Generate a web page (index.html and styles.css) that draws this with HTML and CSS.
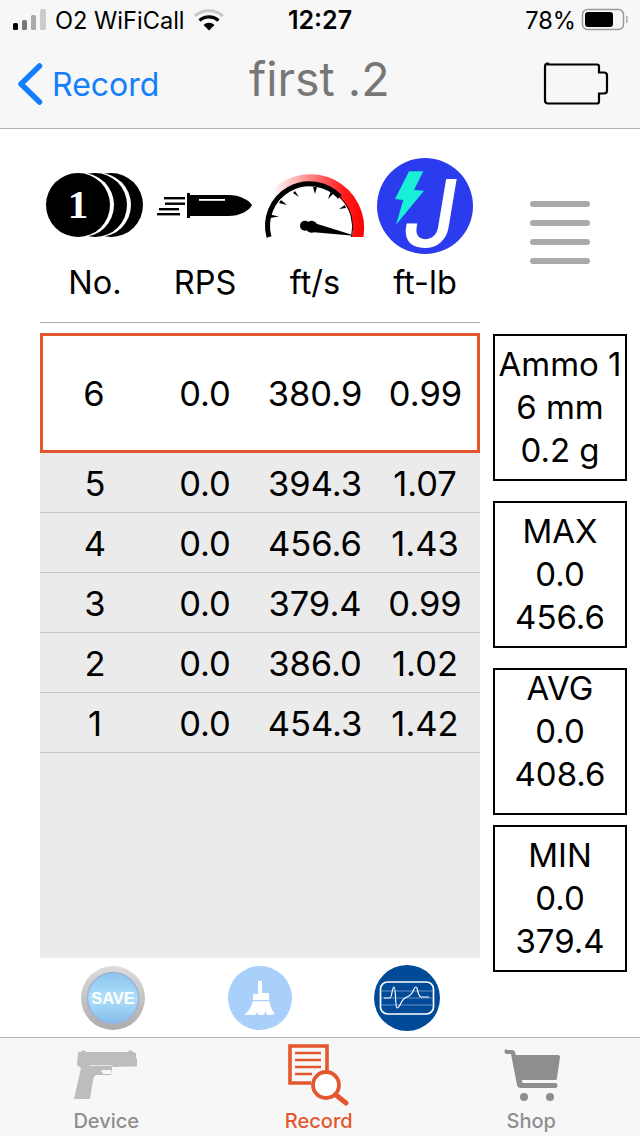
FILE: index.html
```html
<!DOCTYPE html>
<html lang="en">
<head>
<meta charset="utf-8">
<title>first .2</title>
<link rel="stylesheet" href="styles.css">
</head>
<body>
<div class="app">
  <header class="top">
    <div class="status">
      <div class="status-left">
        <svg class="signal" viewBox="13 8 34 24"><rect x="13" y="23" width="5" height="7" rx="1.500" fill="#000"/><rect x="22" y="20" width="5" height="10" rx="1.500" fill="#777"/><rect x="31" y="15" width="5" height="15" rx="1.500" fill="#aaa"/><rect x="40" y="9" width="6" height="21" rx="1.500" fill="#ccc"/></svg>
        <span>O2 WiFiCall</span>
        <svg class="wifi" viewBox="194 9 30 22"><path d="M195 16a21 21 0 0 1 28 0" fill="none" stroke="#c8c8c8" stroke-width="3"/><path d="M199.500 20.500a14.500 14.500 0 0 1 19 0" fill="none" stroke="#000" stroke-width="3.200"/><path d="M203.500 25a8 8 0 0 1 11 0L209 30.500z" fill="#000"/></svg>
      </div>
      <div class="status-time">12:27</div>
      <div class="status-right">
        <span>78%</span>
        <svg class="batt" viewBox="581 8 48 24"><rect x="582.500" y="9.500" width="41" height="20" rx="5" fill="none" stroke="#999" stroke-width="1.500"/><rect x="585" y="12" width="28" height="15" rx="3" fill="#000"/><rect x="626" y="16" width="1.500" height="7" fill="#aaa"/></svg>
      </div>
    </div>
    <nav class="nav">
      <a class="back">
        <svg class="chev" viewBox="16 62 28 45"><path d="M39.500 66L21 84l18.500 18" fill="none" stroke="#147efb" stroke-width="5.500" stroke-linecap="round" stroke-linejoin="round"/></svg>
        <span>Record</span>
      </a>
      <h1 class="title">first .2</h1>
      <svg class="nav-batt" viewBox="543 61 66 44"><path d="M548 63.500h49a2 2 0 0 1 2 2v6h5a3 3 0 0 1 3 3v15a3 3 0 0 1-3 3h-5v8a2 2 0 0 1-2 2h-49a3 3 0 0 1-3-3v-34a3 3 0 0 1 3-3z" fill="none" stroke="#000" stroke-width="2.200"/></svg>
    </nav>
  </header>

  <main class="main">
    <section class="left">
      <div class="head">
        <div class="head-col">
          <svg class="h-icon" viewBox="40 155 110 115">
            <circle cx="111" cy="205" r="32" fill="#000"/><circle cx="99" cy="205" r="32" fill="#fff"/>
            <circle cx="95" cy="205" r="32" fill="#000"/><circle cx="82" cy="205" r="32" fill="#fff"/>
            <circle cx="78" cy="205" r="32" fill="#000"/>
            <text class="coin-num" x="78" y="218" text-anchor="middle">1</text>
          </svg>
          <div class="h-label">No.</div>
        </div>
        <div class="head-col">
          <svg class="h-icon" viewBox="150 155 110 115">
            <path d="M187 193h3v2h38c12 0 21 5 24 10-3 6-12 11-24 11h-38v2h-3z" fill="#000"/>
            <rect x="199" y="199" width="26" height="1.800" fill="#fff"/>
            <rect x="164" y="197" width="21" height="2.400"/><rect x="165" y="202.500" width="20" height="2.400"/><rect x="159" y="208" width="20" height="2.400"/><rect x="157" y="213" width="23" height="2.400"/>
          </svg>
          <div class="h-label">RPS</div>
        </div>
        <div class="head-col">
          <svg class="h-icon" viewBox="260 155 110 115">
            <defs>
              <linearGradient id="redg" x1="0" x2="1" y1="0" y2="0"><stop offset="0" stop-color="#fff"/><stop offset=".35" stop-color="#f99"/><stop offset=".75" stop-color="#f22"/><stop offset="1" stop-color="#f00"/></linearGradient>
            </defs>
            <path d="M272 190A54 54 0 0 1 363.500 237H352A43 43 0 0 0 282 196z" fill="url(#redg)"/>
            <path d="M269 237A42 42 0 0 1 340 197" fill="none" stroke="#000" stroke-width="5"/>
            <path d="M340 197A42 42 0 0 1 351.500 237" fill="none" stroke="#000" stroke-width="1"/>
            <path d="M270 214.500l9 2-9 1.500zM281 200l6 5-8-2zM295 191l4 6-6-4zM313 187l2 7 2-7zM331 191l-3 8 6-6zM345 205l-6 4 7-1z" fill="#000"/>
            <path d="M311 222L351 234.500v1L311 232z" fill="#000"/>
            <circle cx="311.500" cy="226.700" r="6" fill="#000"/><circle cx="305" cy="225.700" r="5" fill="#000"/>
          </svg>
          <div class="h-label">ft/s</div>
        </div>
        <div class="head-col">
          <svg class="h-icon" viewBox="370 155 110 115">
            <circle cx="425" cy="206" r="48" fill="#2b3bee"/>
            <path d="M409 171.300h14.300l-9.300 18.700 10 .7-28 34 7.300-24.700-8.300-1z" fill="#19efd7"/>
            <text class="j-letter" x="430" y="247" text-anchor="middle">J</text>
          </svg>
          <div class="h-label">ft-lb</div>
        </div>
      </div>
      <div class="rows">
        <div class="row row-current"><span>6</span><span>0.0</span><span>380.9</span><span>0.99</span></div>
        <div class="row"><span>5</span><span>0.0</span><span>394.3</span><span>1.07</span></div>
        <div class="row"><span>4</span><span>0.0</span><span>456.6</span><span>1.43</span></div>
        <div class="row"><span>3</span><span>0.0</span><span>379.4</span><span>0.99</span></div>
        <div class="row"><span>2</span><span>0.0</span><span>386.0</span><span>1.02</span></div>
        <div class="row"><span>1</span><span>0.0</span><span>454.3</span><span>1.42</span></div>
      </div>
    </section>
    <aside class="side">
      <div class="menu"><i></i><i></i><i></i><i></i></div>
      <div class="box"><p>Ammo 1</p><p>6 mm</p><p>0.2 g</p></div>
      <div class="box"><p>MAX</p><p>0.0</p><p>456.6</p></div>
      <div class="box box-high"><p>AVG</p><p>0.0</p><p>408.6</p></div>
      <div class="box box-close"><p>MIN</p><p>0.0</p><p>379.4</p></div>
    </aside>
  </main>

  <div class="tools">
    <svg class="tool" viewBox="80 965 66 66">
      <defs>
        <linearGradient id="ring" x1="0" x2="0" y1="0" y2="1"><stop offset="0" stop-color="#dcdcdc"/><stop offset="1" stop-color="#acacac"/></linearGradient>
        <linearGradient id="glass" x1="0" x2="0" y1="0" y2="1"><stop offset="0" stop-color="#8cc4ee"/><stop offset=".5" stop-color="#aee0fa"/><stop offset="1" stop-color="#85bdea"/></linearGradient>
      </defs>
      <circle cx="113" cy="998" r="32" fill="url(#ring)"/>
      <circle cx="113" cy="998" r="25.500" fill="url(#glass)" stroke="#a0b0dc" stroke-width="1.500"/>
      <text class="save-text" x="113" y="1004" text-anchor="middle">SAVE</text>
    </svg>
    <svg class="tool" viewBox="227 965 66 66">
      <circle cx="260" cy="998" r="32" fill="#a8d0fb"/>
      <path d="M258 981h4v12h7v6c1 7 3 11 6 15-3 1-6 1-8 1-1-1-1-3-1-4-1 2-2 4-3 4h-5c0-1 0-2 0-3-1 1-2 2-3 3h-11c4-3 8-8 9-16v-5h5z" fill="#fff"/>
      <rect x="252" y="1000" width="17" height="1.200" fill="#a8d0fb"/>
    </svg>
    <svg class="tool" viewBox="374 965 66 66">
      <circle cx="407" cy="998" r="33" fill="#004a97"/>
      <rect x="380.500" y="982" width="53" height="32" rx="7" fill="none" stroke="#fff" stroke-width="1.700"/>
      <path d="M381 991h52M381 998h52M381 1005h52" stroke="#7fa6d0" stroke-width=".8"/>
      <path d="M384 998h6c2 0 2-11 4-11s1 21 3 21c3 0 4-8 8-10 4-2 5-2 7-5 2-3 2-6 4-6s1 8 5 10h8" fill="none" stroke="#fff" stroke-width="1.200"/>
    </svg>
  </div>

  <footer class="tabs">
    <div class="tab">
      <svg class="tab-icon" viewBox="53 1042 106 64"><path d="M78 1052h3l1-1.500h3l1 1.500h42l1-1.500h3l1 1.500 3 1v5l1 1v7l-3 .5-22 .5v2l-1 6h-15l-2 2-1 3-3 19H74l7-31-4-3z" fill="#bdbdbd"/><rect x="90" y="1065" width="23" height="1" fill="#e6e6e6"/><path d="M101 1070h10v4h-8z" fill="#f7f7f7"/></svg>
      <span class="tab-label">Device</span>
    </div>
    <div class="tab tab-active">
      <svg class="tab-icon" viewBox="266 1042 106 64">
        <path d="M311 1083h-21v-37h37v24" fill="none" stroke="#e4572e" stroke-width="3.600"/>
        <path d="M295 1053h26M295 1060h26M295 1067h26M295 1074h17" stroke="#e4572e" stroke-width="2.600"/>
        <circle cx="326" cy="1085" r="13" fill="#fff" stroke="#e4572e" stroke-width="3.800"/>
        <path d="M336 1095l10 8" stroke="#e4572e" stroke-width="5" stroke-linecap="round"/>
      </svg>
      <span class="tab-label">Record</span>
    </div>
    <div class="tab">
      <svg class="tab-icon" viewBox="478 1042 106 64"><path d="M507 1050h5c2 0 3 1 3.500 4l.5 1h42c1.500 0 2 1 2 2l-3 21c0 2-1 2-3 2h-32l.5 3h33c1 0 2 1 2 2.500s-1 2.500-2 2.500h-35c-2 0-3-1-3.500-3l-6-31h-4c-2 0-2.500-1-2.500-2.500s1-2.500 2.500-2.500z" fill="#8e8e8e"/><circle cx="524" cy="1097" r="4" fill="#8e8e8e"/><circle cx="550" cy="1097" r="4" fill="#8e8e8e"/></svg>
      <span class="tab-label">Shop</span>
    </div>
  </footer>
</div>
</body>
</html>
```
FILE: styles.css
```css
* { box-sizing: border-box; }
html, body { margin: 0; padding: 0; }
body { font-family: "Inter", "Liberation Sans", sans-serif; color: #000; background: #fff; }
.app { width: 640px; height: 1136px; display: flex; flex-direction: column; overflow: hidden; }

.top { height: 129px; flex: none; background: #f7f7f7; border-bottom: 1px solid #b4b4b4; }
.status { height: 40px; display: grid; grid-template-columns: 1fr auto 1fr; align-items: center; padding: 0 13px; font-size: 23.600px; }
.status-left { display: flex; align-items: center; gap: 8px; }
.signal { width: 34px; height: 24px; }
.wifi { width: 30px; height: 22px; margin-left: 1px; }
.status-time { font-weight: 600; font-size: 25px; }
.status-right { display: flex; justify-content: flex-end; align-items: center; gap: 5px; }
.batt { width: 48px; height: 24px; margin-right: -2px; }

.nav { height: 88px; position: relative; display: flex; align-items: center; justify-content: space-between; padding: 0 31px 0 16px; }
.back { display: flex; align-items: center; gap: 8px; color: #147efb; font-size: 32px; }
.chev { width: 28px; height: 45px; }
.title { margin: 0; font-size: 46.500px; font-weight: 400; color: #777; position: absolute; left: 249px; top: 11px; }
.nav-batt { width: 66px; height: 44px; }

.main { flex: 1; display: flex; padding-left: 40px; min-height: 0; }
.left { width: 440px; flex: none; display: flex; flex-direction: column; }
.head { height: 194px; flex: none; padding-top: 26px; display: grid; grid-template-columns: repeat(4, 110px); border-bottom: 1px solid #aaa; margin-bottom: 10px; }
.head-col { display: flex; flex-direction: column; align-items: center; }
.h-icon { width: 110px; height: 115px; display: block; flex: none; }
.h-label { font-size: 32.500px; line-height: 28px; margin-top: -1px; }
.coin-num { font-family: "Liberation Serif", serif; font-weight: 700; font-size: 41px; fill: #fff; }
.j-letter { font-family: "Inter", sans-serif; font-style: italic; font-weight: 500; font-size: 94px; fill: #fff; }
.save-text { font-family: "Liberation Sans", sans-serif; font-weight: 700; font-size: 16.500px; fill: #fff; }

.rows { flex: 1; background: #ebebeb; }
.row { height: 60px; display: grid; grid-template-columns: repeat(4, 110px); align-items: center; justify-items: center; font-size: 34.500px; padding-top: 2px; border-bottom: 1px solid #c4c4c4; }
.row-current { height: 120px; padding-top: 0; background: #fff; border: 3px solid #e4572e; grid-template-columns: 107px 110px 110px 107px; }
.row-current span:first-child { margin-right: 5px; }
.row-current span:last-child { margin-left: 4px; }

.side { flex: 1; padding: 0 13px; display: flex; flex-direction: column; align-items: stretch; }
.menu { height: 205px; flex: none; padding: 72px 37px 0; display: flex; flex-direction: column; gap: 13px; }
.menu i { display: block; height: 6px; border-radius: 3px; background: #aaa; }
.box { height: 147px; flex: none; border: 2px solid #000; text-align: center; font-size: 33px; line-height: 43px; padding-top: 7px; margin-bottom: 20px; white-space: nowrap; }
.box p { margin: 0; }
.box-high { padding-top: 0; margin-bottom: 10px; }
.box-high p:first-child { margin-top: -3px; }
.box-close { margin-bottom: 0; }

.tools { height: 79px; flex: none; display: grid; grid-template-columns: 66px 66px 66px; column-gap: 81px; padding-left: 80px; padding-top: 7px; }
.tool { width: 66px; height: 66px; display: block; }

.tabs { height: 99px; flex: none; background: #f7f7f7; border-top: 1px solid #b4b4b4; display: grid; grid-template-columns: repeat(3, 212.500px); padding-top: 4px; }
.tab { display: flex; flex-direction: column; align-items: center; color: #8e8e8e; font-size: 20px; font-weight: 500; }
.tab-active { color: #e4572e; }
.tab-icon { width: 106px; height: 64px; display: block; }
.tab-label { margin-top: 3px; }
```
